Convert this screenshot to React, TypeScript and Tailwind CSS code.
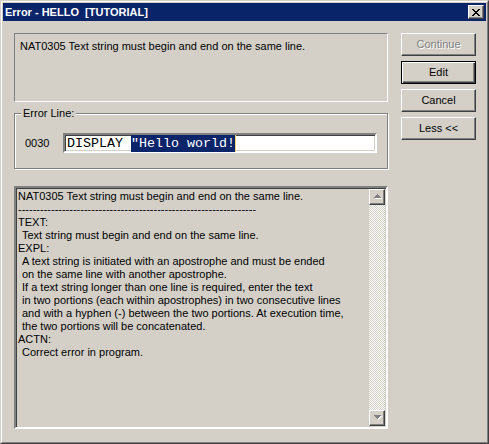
import React from 'react';

const ui = "font-['Liberation_Sans',Arial,sans-serif] text-[11px] leading-[13px] text-black";

const raised = 'border border-t-white border-l-white border-r-[#404040] border-b-[#404040] shadow-[inset_-1px_-1px_0_#808080]';

// [indented, text]
const helpLines: [boolean, string][] = [
  [false, 'NAT0305 Text string must begin and end on the same line.'],
  [false, '-'.repeat(65)],
  [false, 'TEXT:'],
  [true, 'Text string must begin and end on the same line.'],
  [false, 'EXPL:'],
  [true, 'A text string is initiated with an apostrophe and must be ended'],
  [true, 'on the same line with another apostrophe.'],
  [true, 'If a text string longer than one line is required, enter the text'],
  [true, 'in two portions (each within apostrophes) in two consecutive lines'],
  [true, 'and with a hyphen (-) between the two portions. At execution time,'],
  [true, 'the two portions will be concatenated.'],
  [false, 'ACTN:'],
  [true, 'Correct error in program.'],
];

function DialogButton({ label, isDefault, disabled }: { label: string; isDefault?: boolean; disabled?: boolean }) {
  const frame = isDefault
    ? 'border border-black shadow-[inset_1px_1px_0_#fff,inset_-1px_-1px_0_#404040,inset_-2px_-2px_0_#808080]'
    : raised;
  return (
    <div className={`h-[23px] w-[75px] bg-[#d4d0c8] flex items-center justify-center ${frame}`}>
      <span className={disabled ? 'text-[#808080] [text-shadow:1px_1px_0_#fff]' : ''}>{label}</span>
    </div>
  );
}

function CloseGlyph() {
  // 8x7 pixel X like the classic caption button
  const rows = ['##....##', '.##..##.', '..####..', '...##...', '..####..', '.##..##.', '##....##'];
  return (
    <svg width="8" height="7" viewBox="0 0 8 7" shapeRendering="crispEdges">
      {rows.map((r, y) =>
        r.split('').map((c, x) => (c === '#' ? <rect key={`${x}-${y}`} x={x} y={y} width="1" height="1" fill="#000" /> : null))
      )}
    </svg>
  );
}

function ScrollArrow({ up }: { up?: boolean }) {
  const pts = up ? '4,0 8,4 0,4' : '0,0 8,0 4,4';
  return (
    <div className={`h-[16px] w-[16px] bg-[#d4d0c8] flex items-center justify-center ${raised}`}>
      <svg width="9" height="6" viewBox="0 0 9 6" shapeRendering="crispEdges">
        <polygon points={pts} fill="#ffffff" transform="translate(1,1)" />
        <polygon points={pts} fill="#808080" />
      </svg>
    </div>
  );
}

export default function App() {
  return (
    <div className={`${ui} w-[489px] h-[444px] bg-[#d4d0c8] border border-t-[#d4d0c8] border-l-[#d4d0c8] border-r-[#404040] border-b-[#404040]`}>
      <div className="h-full flex flex-col border border-t-white border-l-white border-r-[#808080] border-b-[#808080] p-px">
        {/* Title bar */}
        <div className="h-[18px] bg-[#0a246a] flex items-center justify-between pl-[2px] pr-[2px]">
          <span className="text-white font-bold whitespace-pre">Error - HELLO  [TUTORIAL]</span>
          <div className={`h-[14px] w-[16px] bg-[#d4d0c8] flex items-center justify-center ${raised}`}>
            <CloseGlyph />
          </div>
        </div>

        <div className="flex flex-1 pl-[11px] pt-[12px]">
          {/* Left column */}
          <div className="w-[374px] flex flex-col">
            <div className="h-[69px] border border-t-[#808080] border-l-[#808080] border-r-white border-b-white pl-[5px] pt-[6px]">
              NAT0305 Text string must begin and end on the same line.
            </div>

            <div className="relative mt-[11px] h-[56px] border border-[#808080] shadow-[1px_1px_0_#fff,inset_1px_1px_0_#fff] flex items-center pl-[10px] pt-[4px]">
              <span className="absolute -top-[7px] left-[6px] bg-[#d4d0c8] px-[2px]">Error Line:</span>
              <span className="w-[38px]">0030</span>
              <div className="h-[20px] w-[314px] bg-white border-2 border-t-[#808080] border-l-[#808080] border-r-white border-b-white shadow-[inset_1px_1px_0_#404040,inset_-1px_-1px_0_#d4d0c8] flex items-center pl-[2px] font-['Liberation_Mono','Courier_New',monospace] text-[13.33px] leading-[17px]">
                <span className="whitespace-pre">DISPLAY </span>
                <span className="whitespace-pre bg-[#0a246a] text-white">"Hello world!</span>
                <span className="w-px h-[17px] bg-[#f5d67a]" />
              </div>
            </div>

            <div className="mt-[17px] h-[243px] flex border-2 border-t-[#808080] border-l-[#808080] border-r-white border-b-white shadow-[inset_1px_1px_0_#404040,inset_-1px_-1px_0_#d4d0c8] p-px">
              <div className="flex-1 pl-[1px] pt-[1px]">
                {helpLines.map(([indent, l], i) => (
                  <div key={i} className={`whitespace-pre h-[13px] ${indent ? 'pl-[4px]' : ''}`}>{l}</div>
                ))}
              </div>
              <div className="w-[16px] flex flex-col">
                <ScrollArrow up />
                <div className="flex-1 bg-[repeating-conic-gradient(#ffffff_0%_25%,#d4d0c8_0%_50%)] bg-[length:2px_2px]" />
                <ScrollArrow />
              </div>
            </div>
          </div>

          {/* Buttons */}
          <div className="ml-[13px] flex flex-col gap-[5px]">
            <DialogButton label="Continue" disabled />
            <DialogButton label="Edit" isDefault />
            <DialogButton label="Cancel" />
            <DialogButton label="Less <<" />
          </div>
        </div>
      </div>
    </div>
  );
}
